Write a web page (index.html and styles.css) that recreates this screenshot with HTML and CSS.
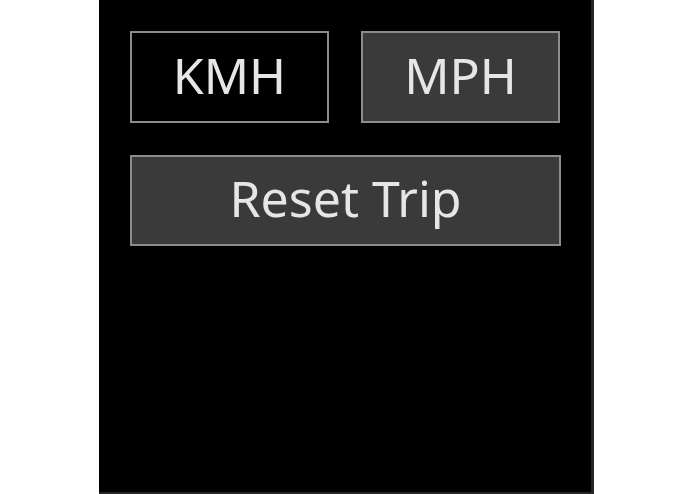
FILE: index.html
```html
<!DOCTYPE html>
<html>
<head>
<meta charset="utf-8">
<link rel="stylesheet" href="styles.css">
</head>
<body>
<div class="panel">
  <div class="row">
    <div class="btn">KMH</div>
    <div class="btn btn-filled">MPH</div>
  </div>
  <div class="btn btn-filled btn-wide">Reset Trip</div>
</div>
</body>
</html>
```
FILE: styles.css
```css
html, body {
  margin: 0;
  padding: 0;
  background: #ffffff;
  height: 494px;
  overflow: hidden;
}
.panel {
  margin-left: 99px;
  width: 495px;
  height: 494px;
  box-sizing: border-box;
  background: #000000;
  border-right: 3px solid #262626;
  border-bottom: 2px solid #262626;
  padding: 31px 0 0 31px;
  display: flex;
  flex-direction: column;
  gap: 32px;
}
.row {
  display: flex;
  gap: 32px;
}
.btn {
  width: 199px;
  height: 91.5px;
  box-sizing: border-box;
  border: 2px solid #8c8c8c;
  background: #000000;
  color: #e6e6e6;
  font-family: "Noto Sans", "Open Sans", sans-serif;
  font-size: 50px;
  display: flex;
  align-items: center;
  justify-content: center;
  line-height: 1;
  padding-bottom: 4px;
}
.btn-filled {
  background: #3a3a3a;
}
.btn-wide {
  width: 431px;
}
```
